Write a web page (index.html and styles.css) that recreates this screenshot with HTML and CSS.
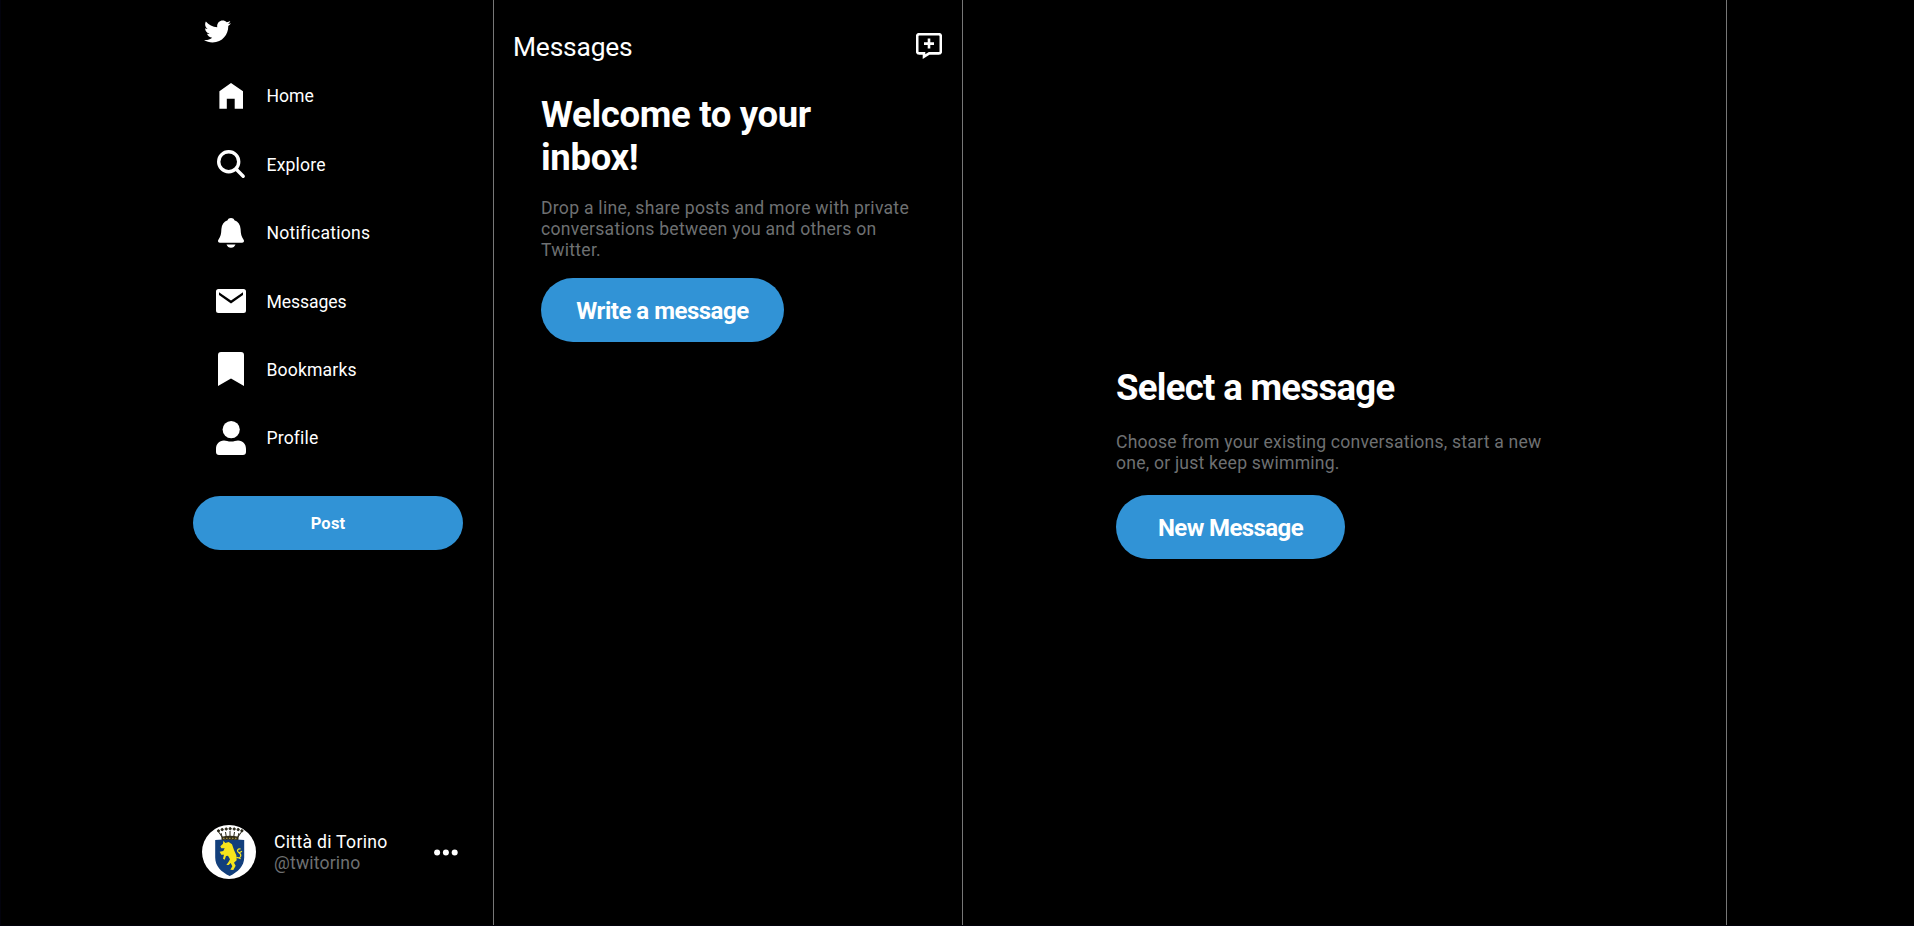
FILE: index.html
```html
<!DOCTYPE html>
<html lang="en">
<head>
<meta charset="utf-8">
<title>Messages / Twitter</title>
<link rel="stylesheet" href="styles.css">
</head>
<body>
<div class="app">
  <nav class="sidebar">
    <a class="logo"><svg width="27" height="27" viewBox="0 0 512 512"><path d="M459.37 151.716c.325 4.548.325 9.097.325 13.645 0 138.72-105.583 298.558-298.558 298.558-59.452 0-114.68-17.219-161.137-47.106 8.447.974 16.568 1.299 25.34 1.299 49.055 0 94.213-16.568 130.274-44.832-46.132-.975-84.792-31.188-98.112-72.772 6.498.974 12.995 1.624 19.818 1.624 9.421 0 18.843-1.3 27.614-3.573-48.081-9.747-84.143-51.98-84.143-102.985v-1.299c13.969 7.797 30.214 12.67 47.431 13.319-28.264-18.843-46.781-51.005-46.781-87.391 0-19.492 5.197-37.36 14.294-52.954 51.655 63.675 129.3 105.258 216.365 109.807-1.624-7.797-2.599-15.918-2.599-24.04 0-57.828 46.782-104.934 104.934-104.934 30.213 0 57.502 12.67 76.67 33.137 23.715-4.548 46.456-13.32 66.599-25.34-7.798 24.366-24.366 44.833-46.132 57.827 21.117-2.273 41.584-8.122 60.426-16.243-14.292 20.791-32.161 39.308-52.628 54.253z"/></svg></a>
    <ul class="menu">
      <li class="item"><span class="icon"><svg width="24" height="26" viewBox="0 0 24 26"><path d="M12 0L24 8.2V25.7H15.7V15.7H7.8V25.7H.4V8.2z"/></svg></span><span class="label">Home</span></li>
      <li class="item"><span class="icon"><svg width="29" height="29" viewBox="0 0 29 29"><g class="stroke"><circle cx="11.700" cy="11.700" r="10"/><path d="M19 19L26.200 26.200"/></g></svg></span><span class="label t-explore">Explore</span></li>
      <li class="item"><span class="icon"><svg width="26" height="30" viewBox="0 0 26 30"><path d="M13 0c1.700 0 3 .9 3.400 2.300C20.200 3.700 22.300 6.800 22.600 11c.2 4.800.7 7.300 3 10.800.9 1.400.1 2.900-1.500 2.900H1.900c-1.600 0-2.400-1.500-1.500-2.900 2.300-3.500 2.800-6 3-10.800.3-4.200 2.400-7.300 6.200-8.700C10 .9 11.300 0 13 0zM8.500 26.500h9c-.8 2-2.300 3.300-4.500 3.300s-3.700-1.300-4.500-3.300z"/></svg></span><span class="label t-notifications">Notifications</span></li>
      <li class="item"><span class="icon"><svg width="30" height="24" viewBox="0 0 30 24"><path d="M2.500 0h25A2.500 2.500 0 0 1 30 2.500v19a2.500 2.500 0 0 1-2.500 2.500h-25A2.500 2.500 0 0 1 0 21.500v-19A2.500 2.500 0 0 1 2.500 0z"/><path class="cut" d="M3 3.300v2.800l12 8.300 12-8.300V3.300l-12 8.100z"/></svg></span><span class="label t-messages">Messages</span></li>
      <li class="item"><span class="icon bookmark"><svg width="26" height="34" viewBox="0 0 26 34"><path d="M3 0h20a3 3 0 0 1 3 3v31l-13-7.400L0 34V3a3 3 0 0 1 3-3z"/></svg></span><span class="label t-bookmarks">Bookmarks</span></li>
      <li class="item"><span class="icon"><svg width="30" height="34" viewBox="0 0 30 34"><circle cx="15.200" cy="8.600" r="8.600"/><path d="M8 19.400c2 0 4 1.200 7 1.200s5-1.200 7-1.200c5 0 8 3.600 8 8.500V31c0 1.900-1.200 3-3 3H3c-1.800 0-3-1.100-3-3v-3.100c0-4.900 3-8.500 8-8.500z"/></svg></span><span class="label t-bookmarks">Profile</span></li>
    </ul>
    <button class="btn post">Post</button>
    <div class="account">
      <svg class="avatar" width="54" height="54" viewBox="0 0 54 54">
        <circle cx="27" cy="27" r="27"/>
        <path class="shield" d="M13.200 15q14.500-1.400 29 0v17.500c0 8.500-6.300 14.500-14.500 18.500-8.500-4-14.500-10-14.500-18.500z"/>
        <g class="crown"><path d="M19 8l2 7M23.500 7l1.300 8M28 6v9M32.500 7l-1.300 8M37 8l-2 7M16 6l4 6M40 6l-4 6"/><circle cx="16.500" cy="5.800" r="1.100"/><circle cx="20.200" cy="4.600" r="1.100"/><circle cx="24.200" cy="4" r="1.100"/><circle cx="28.200" cy="3.700" r="1.100"/><circle cx="32.200" cy="4" r="1.100"/><circle cx="36.200" cy="4.600" r="1.100"/><circle cx="39.900" cy="5.800" r="1.100"/></g>
        <path class="crown-base" d="M19.500 11.800q8.500-2 17 0v3h-17z"/>
        <path class="jewels" d="M21 13.300h14"/>
        <g transform="translate(10 1) scale(.3333)">
          <path class="bull" d="M34 44L40 51L50 48L60 55L66 72L73 88L74 103L66 110L71 119L64 132L55 131L61 121L56 111L50 117L43 117L50 107L54 100L48 89L42 90L38 101L33 98L36 86L28 86L23 77L34 75L38 67L28 67L25 61L33 53z"/>
          <path class="tail" d="M73 94C88 99 90 86 81 80S78 67 86 69M82 80L90 76M79 95L86 98"/>
        </g>
      </svg>
      <div class="who"><div class="name">Città di Torino</div><div class="handle">@twitorino</div></div>
      <svg class="dots" width="24" height="7" viewBox="0 0 24 7"><circle cx="3.100" cy="3.500" r="3"/><circle cx="11.900" cy="3.500" r="3"/><circle cx="20.700" cy="3.500" r="3"/></svg>
    </div>
  </nav>
  <section class="inbox">
    <header class="head">
      <h1 class="title">Messages</h1>
      <svg class="compose" width="26" height="26" viewBox="0 0 26 26"><path d="M3.200 1.200h19.600a2 2 0 0 1 2 2v15.200a2 2 0 0 1-2 2H13.200L8 23.600v-3.200H3.200a2 2 0 0 1-2-2V3.200a2 2 0 0 1 2-2z"/><path d="M13 5.600v10M8 10.600h10"/></svg>
    </header>
    <div class="welcome">
      <h2 class="big t-welcome">Welcome to your<br>inbox!</h2>
      <p class="copy t-drop">Drop a line, share posts and more with private<br>conversations between you and others on<br>Twitter.</p>
      <button class="btn large write">Write a message</button>
    </div>
  </section>
  <main class="thread">
    <div class="empty">
      <h2 class="big t-select">Select a message</h2>
      <p class="copy t-choose">Choose from your existing conversations, start a new<br>one, or just keep swimming.</p>
      <button class="btn large new">New Message</button>
    </div>
  </main>
</div>
</body>
</html>
```
FILE: styles.css
```css
* { box-sizing: border-box; }
html, body { margin: 0; height: 100%; }
body {
  background: #000;
  color: #fff;
  font: 17.6px/21px Roboto, "Liberation Sans", sans-serif;
  border-bottom: 1px solid #02020c;
  border-left: 1px solid #02020c;
  overflow: hidden;
}
h1, h2, p, ul { margin: 0; padding: 0; }
svg { display: block; fill: #fff; flex: none; }
.app { display: flex; height: 100%; white-space: nowrap; }

.sidebar {
  width: 493px;
  padding: 18px 30px 46px 192px;
  border-right: 1px solid #777;
  display: flex;
  flex-direction: column;
}
.logo { display: block; height: 27px; padding-left: 11px; }
.menu { list-style: none; margin-top: 17px; }
.item { display: flex; align-items: center; height: 68.4px; padding-left: 19px; }
.icon { display: flex; justify-content: center; width: 38px; margin-right: 16.500px; }
.bookmark { padding-bottom: 1px; }
.label { padding-top: 1.500px; }
.t-explore { letter-spacing: .17px; }
.t-notifications { letter-spacing: .24px; }
.t-messages { letter-spacing: -.08px; }
.t-bookmarks { letter-spacing: .14px; }
.stroke { fill: none; stroke: #fff; stroke-width: 3.400; stroke-linecap: round; }
.cut { fill: #000; }

.btn {
  display: block;
  border: 0;
  padding: 0;
  color: #fff;
  background: #3193d6;
  font-family: inherit;
  font-weight: 700;
}
.post { margin-top: 24px; width: 270px; height: 54px; flex: none; border-radius: 27px; font-size: 16.500px; letter-spacing: .2px; }

.account { display: flex; align-items: center; margin-top: auto; padding-left: 9px; }
.who { margin: 1px auto 0 18px; }
.name { letter-spacing: .3px; }
.handle { letter-spacing: .17px; }
.handle, .copy { color: #6e7072; }
.dots { margin-right: 5px; }
.shield { fill: #123f7c; }
.crown { fill: #292719; stroke: #292719; stroke-width: 1; }
.crown-base { fill: #302b16; }
.jewels { fill: none; stroke: #bca648; stroke-width: 1; stroke-dasharray: 1.500 1.500; }
.bull { fill: #f6e51c; }
.tail { fill: none; stroke: #f6e51c; stroke-width: 3.500; }

.inbox { width: 469px; border-right: 1px solid #777; padding: 31px 20px 0 19px; }
.head { display: flex; justify-content: space-between; align-items: flex-start; height: 62px; }
.title { font-size: 26.400px; line-height: 32px; font-weight: 400; letter-spacing: -.2px; }
.compose { margin-top: 2px; fill: none; stroke: #fff; stroke-width: 2.600; }
.welcome { padding-left: 28px; }
.big { font-size: 36.500px; line-height: 43px; font-weight: 700; }
.t-welcome { letter-spacing: -.33px; }
.t-select { letter-spacing: -.69px; }
.copy { margin-top: 19px; }
.t-drop { letter-spacing: .26px; }
.t-choose { margin-top: 23px; letter-spacing: .21px; }
.large { margin-top: 17px; height: 64px; padding-top: 1px; border-radius: 32px; font-size: 24px; }
.write { width: 243px; letter-spacing: -.49px; }
.new { width: 229px; margin-top: 21px; letter-spacing: -.6px; }

.thread { width: 764px; border-right: 1px solid #777; padding: 366px 0 0 153px; }
```
